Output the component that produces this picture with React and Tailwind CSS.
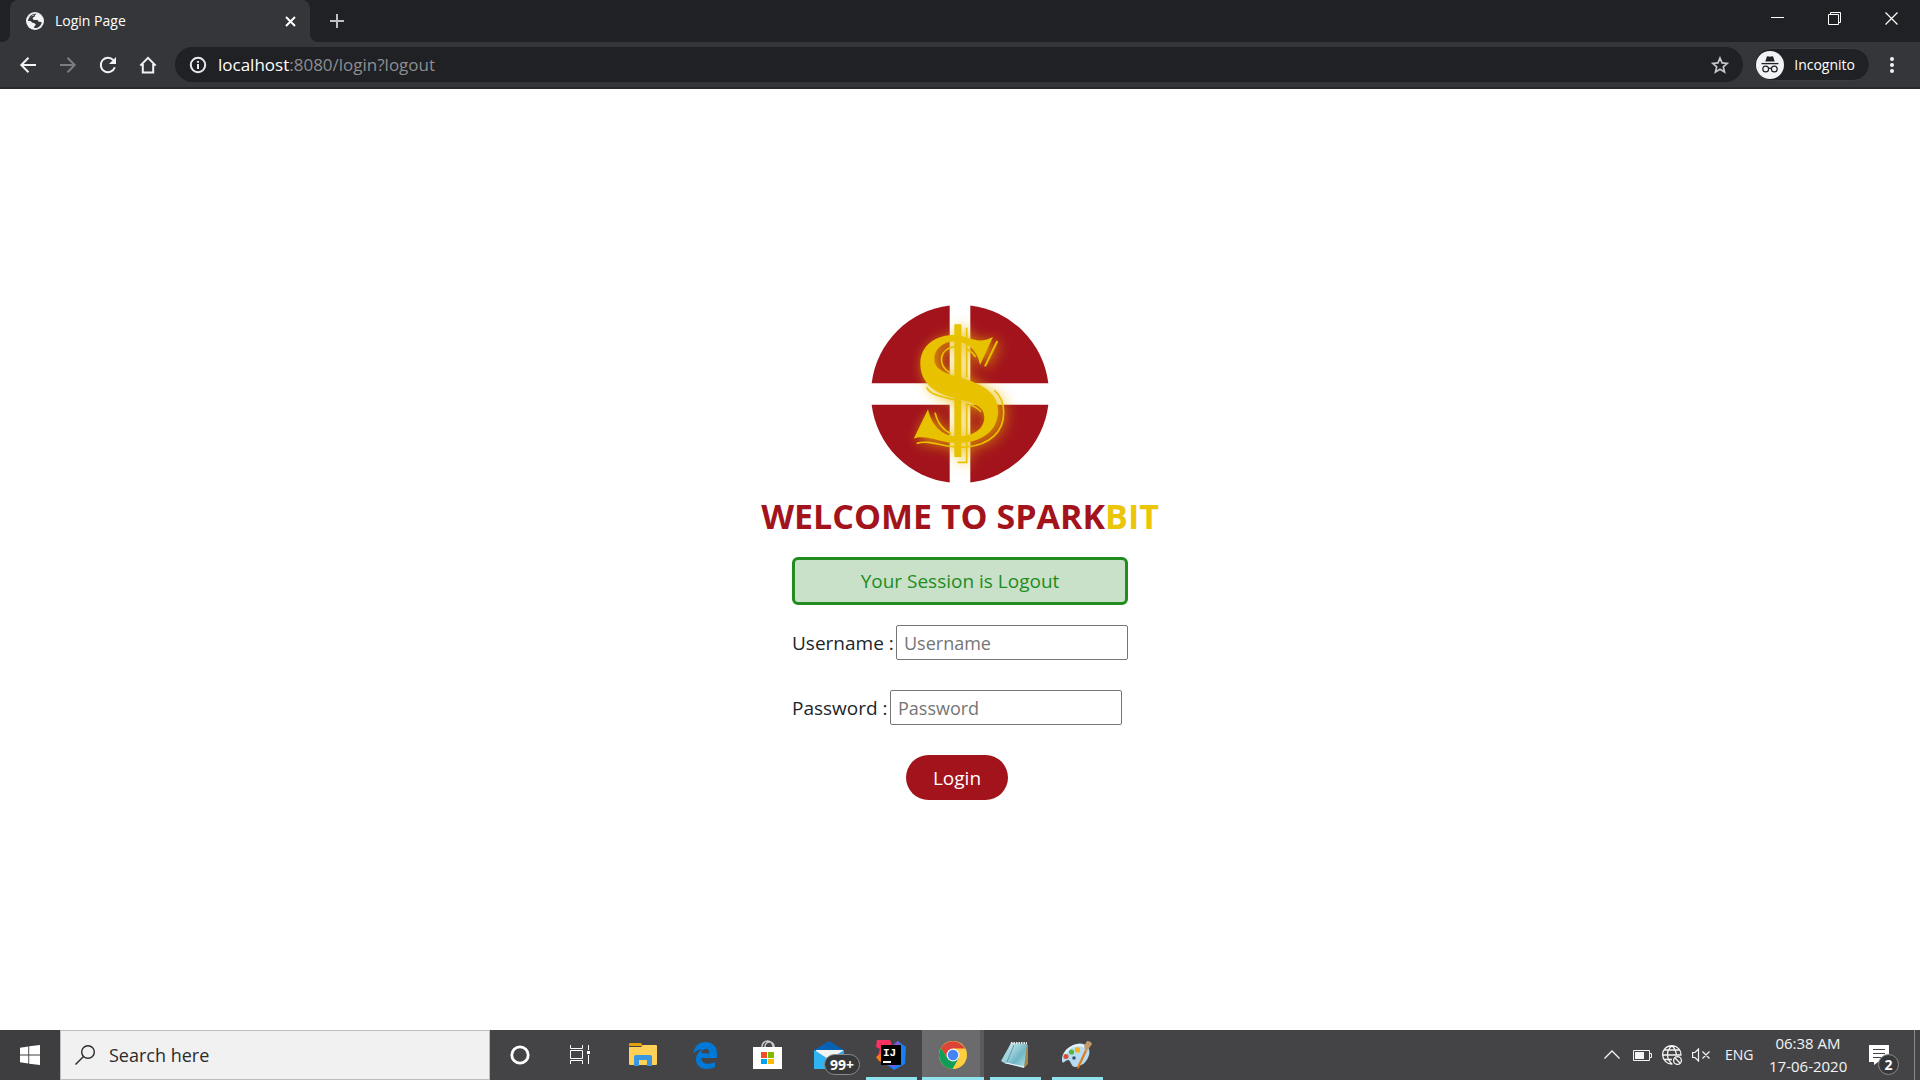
import React from "react";

function TabFlare({ side }) {
  return (
    <span className="block h-2 w-2 bg-[#35363a]">
      <span
        className={
          side === "left"
            ? "block h-2 w-2 rounded-br-lg bg-[#202124]"
            : "block h-2 w-2 rounded-bl-lg bg-[#202124]"
        }
      />
    </span>
  );
}

function TabStrip() {
  return (
    <div className="flex h-[42px] items-end bg-[#202124]">
      <div className="flex h-full items-end pl-[2px]">
        <TabFlare side="left" />
        <div className="flex h-full w-[300px] items-center rounded-t-lg bg-[#35363a] pl-4 pr-[14px] text-white">
          <svg className="h-[18px] w-[18px]" viewBox="0 0 18 18" aria-hidden="true">
            <circle cx="9" cy="9" r="9" fill="#f1f3f4" />
            <path
              d="M10.500 1.800Q8.500 3.200 8.600 4.800Q6.800 4.900 6.600 6.400Q7 8 9 8.100H11.200Q12.700 8.500 12.600 9.900Q14.500 9.600 15.800 10.600Q14.800 14.600 11 15.900Q9.600 16.200 8.200 16V14.400Q9.800 13.800 9.700 12.200Q9.200 11 7.600 10.900H5.200Q5 9 3.400 8.900H2Q2.600 4.600 5.800 2.700Q8 1.500 10.500 1.800Z"
              fill="#35363a"
            />
            <path d="M2 9.200H5Q5.600 11 7.800 11Q8.800 12.400 7.400 13.800V16.500Q2.600 14.500 2 9.200ZM2.800 6.400Q5.400 3 9.300 2.300Q7.500 4.200 4.800 4.600Q4.400 6 2.800 6.400Z" fill="#f1f3f4" />
          </svg>
          <h2 className="ml-[11px] flex-1 text-[14px] leading-5">Login Page</h2>
          <button type="button" aria-label="Close tab" className="flex h-3 w-3 items-center justify-center">
            <svg className="h-[11px] w-[11px]" viewBox="0 0 11 11" stroke="#fff" strokeWidth="2">
              <path d="M1 1 10 10M10 1 1 10" />
            </svg>
          </button>
        </div>
        <TabFlare side="right" />
      </div>
      <button type="button" aria-label="New tab" className="ml-[11px] mb-[13px] h-4 w-4">
        <svg className="h-4 w-4" viewBox="0 0 16 16" stroke="#bdc1c6" strokeWidth="2">
          <path d="M8 1v14M1 8h14" />
        </svg>
      </button>
      <div className="ml-auto flex h-full items-center pb-[5px] text-white">
        <button type="button" aria-label="Minimize" className="flex h-9 w-[57px] items-center justify-center">
          <svg className="h-[13px] w-[13px]" viewBox="0 0 13 13" stroke="currentColor" fill="none">
            <path d="M0 5.500h13" />
          </svg>
        </button>
        <button type="button" aria-label="Restore" className="flex h-9 w-[57px] items-center justify-center">
          <svg className="h-[13px] w-[13px]" viewBox="0 0 13 13" stroke="currentColor" fill="none">
            <path d="M.5 2.500h10v10h-10zM2.500 2.500v-2h10v10h-2" />
          </svg>
        </button>
        <button type="button" aria-label="Close" className="flex h-9 w-[57px] items-center justify-center">
          <svg className="h-[13px] w-[13px]" viewBox="0 0 13 13" stroke="currentColor" strokeWidth="1.200" fill="none">
            <path d="M.5.500l12 12M12.500.500l-12 12" />
          </svg>
        </button>
      </div>
    </div>
  );
}

function ToolButton({ label, dim, children }) {
  return (
    <button
      type="button"
      aria-label={label}
      className={
        dim
          ? "flex h-5 w-10 items-center justify-center text-[#7c7d80]"
          : "flex h-5 w-10 items-center justify-center text-[#f1f3f4]"
      }
    >
      <svg className="h-[18px] w-[18px]" viewBox="0 0 18 18" fill="none" stroke="currentColor" strokeWidth="2">
        {children}
      </svg>
    </button>
  );
}

function Toolbar() {
  return (
    <div className="flex h-[47px] items-center border-b-2 border-[#28292c] bg-[#35363a] pl-2 pr-[18px]">
      <ToolButton label="Back">
        <path d="M17 9H2.500M9.500 1.800 2.300 9l7.200 7.200" />
      </ToolButton>
      <ToolButton label="Forward" dim>
        <path d="M1 9h14.500M8.500 1.800 15.700 9l-7.200 7.200" />
      </ToolButton>
      <ToolButton label="Reload">
        <path d="M15.800 11.200A7.200 7.200 0 1 1 14.300 4.100" />
        <path d="M17 1v7h-7z" fill="currentColor" stroke="none" />
      </ToolButton>
      <ToolButton label="Home">
        <path d="M1.300 9.600 9 1.900l7.700 7.700M3.800 8v8.500h10.400V8" />
      </ToolButton>
      <div className="ml-[7px] flex h-[35px] flex-1 items-center rounded-full bg-[#202124] pl-[14px] pr-[14px]">
        <svg className="h-[18px] w-[18px]" viewBox="0 0 18 18" fill="none" stroke="#e8eaed" strokeWidth="2" aria-hidden="true">
          <circle cx="9" cy="9" r="7.200" />
          <path d="M9 8v5M9 5v1.800" />
        </svg>
        <p className="ml-[11px] flex-1 text-[17px] leading-6 text-[#8c8e91]">
          <span className="text-white">localhost</span>:8080/login?logout
        </p>
        <button type="button" aria-label="Bookmark this tab">
          <svg className="h-[18px] w-[18px]" viewBox="0 0 18 18" fill="none" stroke="#c4c7ca" strokeWidth="1.700">
            <path d="m9 2 2.050 4.900 5.200.450-3.950 3.450 1.200 5.200L9 13.250 4.500 16l1.200-5.200L1.750 7.350l5.200-.450z" />
          </svg>
        </button>
      </div>
      <div className="ml-[11px] flex h-[33px] items-center rounded-full border border-[#3c3d41] bg-[#202124] pl-px pr-[14px]">
        <svg className="h-7 w-7" viewBox="0 0 28 28" aria-hidden="true">
          <circle cx="14" cy="14" r="14" fill="#f1f3f4" />
          <path d="M9.300 10.500 10.800 5.800q.3-.8 1.100-.6l2.100.5 2.100-.5q.8-.2 1.100.6l1.500 4.700z" fill="#202124" />
          <path d="M5.500 12.600h17" stroke="#202124" strokeWidth="1.300" />
          <g fill="none" stroke="#202124" strokeWidth="1.200">
            <circle cx="9.700" cy="18" r="2.900" />
            <circle cx="18.300" cy="18" r="2.900" />
            <path d="M12.600 17.600q1.400-.9 2.800 0" />
          </g>
        </svg>
        <span className="ml-[10px] text-[14px] leading-5 text-white">Incognito</span>
      </div>
      <button type="button" aria-label="Menu" className="ml-3 flex h-5 w-5 items-center justify-center">
        <svg className="h-[18px] w-1" viewBox="0 0 4 18" fill="#f1f3f4">
          <circle cx="2" cy="3" r="2" />
          <circle cx="2" cy="9" r="2" />
          <circle cx="2" cy="15" r="2" />
        </svg>
      </button>
    </div>
  );
}

function EmblemShape() {
  return (
    <>
      <path
        fill="currentColor"
        d="M428 140 389 224C383 183 352 154 315 153C276 154 252 178 252 206C252 238 285 249 330 262C392 279 443 305 443 362C443 422 395 457 322 458C268 458 228 430 190 445L233 357C243 402 272 438 320 438C370 438 402 416 402 380C402 345 365 335 310 322C250 308 210 275 210 220C210 165 255 134 312 134C352 134 378 166 428 140Z"
      />
      <path fill="currentColor" d="M312 102h21v398h-21z" />
      <g fill="none" stroke="currentColor" strokeWidth="5">
        <path strokeWidth="6" d="M441 152 404 228" />
        <path d="M349 112V176Q366 184 376 200M349 165V262M322 516H349V341Q374 346 392 364" />
        <path d="M298 247C262 228 263 174 316 169" />
        <path d="M229 291C240 315 275 319 312 328" />
        <path d="M199 459C245 446 285 477 350 470C420 463 460 423 460 367C460 340 450 315 432 300" />
        <path d="M254 367C262 400 280 421 303 430" />
      </g>
    </>
  );
}

function Logo() {
  return (
    <svg className="h-[178px] w-[178px]" viewBox="62 44 534 534" role="img" aria-label="Sparkbit logo">
      <defs>
        <filter id="glow" x="-40%" y="-40%" width="180%" height="180%">
          <feGaussianBlur stdDeviation="19" />
        </filter>
      </defs>
      <g fill="#a2131c">
        <path d="M298 45.500V279H64A267 267 0 0 1 298 45.500Z" />
        <path d="M360 45.500V279H594A267 267 0 0 0 360 45.500Z" />
        <path d="M298 576.500V343H64A267 267 0 0 0 298 576.500Z" />
        <path d="M360 576.500V343H594A267 267 0 0 1 360 576.500Z" />
      </g>
      <g transform="translate(10 6)">
        <g className="text-[#e8b800]" filter="url(#glow)" opacity="0.9">
          <EmblemShape />
        </g>
      </g>
      <g className="text-[#e8c200]">
        <EmblemShape />
      </g>
    </svg>
  );
}

function LoginPage() {
  const field =
    "h-[35px] w-[232px] rounded-[2px] border border-[#767676] bg-white px-[7px] text-[18px] text-[#212529] placeholder:text-[#757575]";
  return (
    <main className="flex flex-1 flex-col items-center justify-center bg-white pb-[14px] text-[19px] leading-7 text-[#212529]">
      <Logo />
      <h1 className="mt-[9px] text-[34px] font-bold leading-[48px] text-[#a2131c]">
        WELCOME TO SPARK<span className="text-[#ebc50a]">BIT</span>
      </h1>
      <form className="mt-[17px] flex w-[336px] flex-col" onSubmit={(e) => e.preventDefault()}>
        <p role="status" className="flex h-12 items-center justify-center rounded-md border-[3px] border-[#228b22] bg-[#c8e1c8] text-[#228b22]">
          Your Session is Logout
        </p>
        <div className="mt-5 flex items-center justify-between">
          <label htmlFor="username">Username :</label>
          <input id="username" type="text" placeholder="Username" className={field} />
        </div>
        <div className="mt-[30px] mr-[6px] flex items-center justify-between">
          <label htmlFor="password">Password :</label>
          <input id="password" type="password" placeholder="Password" className={field} />
        </div>
        <div className="mt-[30px] mr-[6px] flex justify-center">
          <button type="submit" className="h-[45px] w-[102px] rounded-full bg-[#a2131c] text-white">
            Login
          </button>
        </div>
      </form>
    </main>
  );
}

function Task({ label, running, active, children }) {
  return (
    <button
      type="button"
      aria-label={label}
      className={
        active
          ? "relative flex h-full w-[62px] items-center justify-center border-r-4 border-[#5a5a5c] bg-[#6b6b6d] pl-1"
          : "relative flex h-full w-[62px] items-center justify-center"
      }
    >
      {children}
      {running && (
        <span
          className={
            active
              ? "absolute bottom-0 left-0 -right-1 h-[3px] bg-[#8ee3ee]"
              : "absolute bottom-0 left-[6px] right-[5px] h-[3px] bg-[#8ee3ee]"
          }
        />
      )}
    </button>
  );
}

function TaskApps() {
  return (
    <>
      <Task label="File Explorer">
        <svg className="h-6 w-7" viewBox="0 0 28 24">
          <path d="M0 1q0-1 1-1h11l2 3H0z" fill="#e0a008" />
          <path d="M0 4h12l2-2h13q1 0 1 1v18q0 1-1 1H1q-1 0-1-1z" fill="#ffd257" />
          <path d="M5 23V14q0-2 2-2h14q2 0 2 2v9h-5v-6h-8v6z" fill="#3897e0" />
        </svg>
      </Task>
      <Task label="Microsoft Edge">
        <svg className="mt-px h-[27px] w-6" viewBox="0 0 24 27">
          <path
            d="M0 12C1.500 4 6 0 12.500 0C20 0 24 5 24 11.500V16H8.200C8.500 20 11.500 21.800 15 21.800C18 21.800 20.500 20.800 22 19.800V25C20 26.200 17 27 13.500 27C7 27 3 22.800 3 17.500C3 13 5.500 9.500 9.500 7.500C5 7.700 2 9 0 12ZM8.400 11.300H16.400C16.400 8.500 15 7 12.600 7C10 7 8.700 8.800 8.400 11.300Z"
            fill="#0078d7"
          />
        </svg>
      </Task>
      <Task label="Microsoft Store">
        <svg className="mb-px h-[29px] w-[29px]" viewBox="0 0 29 29">
          <path d="M9 8V6.500a5.500 5.500 0 0 1 11 0V8M12 8V6a4.500 4.500 0 0 1 9 1" fill="none" stroke="#c9c9c9" strokeWidth="1.500" />
          <path d="M0 7h29v22H0z" fill="#fff" />
          <path d="M8 12h6v6H8z" fill="#f25022" />
          <path d="M15 12h6v6h-6z" fill="#7fba00" />
          <path d="M8 19h6v5H8z" fill="#00a4ef" />
          <path d="M15 19h6v5h-6z" fill="#ffb900" />
        </svg>
      </Task>
      <Task label="Mail, more than 99 unread">
        <svg className="h-7 w-[30px]" viewBox="0 0 30 28">
          <path d="M0 9 15 0l15 9v7H0z" fill="#0862b4" />
          <path d="M2 9h27v9H2z" fill="#f3f3f3" />
          <path d="M0 9 15 19 30 9v19H0z" fill="#29a8ea" />
          <path d="M0 9 30 28H0z" fill="#2fb3f3" />
        </svg>
        <span className="absolute left-[26px] top-6 flex h-[21px] w-9 items-center justify-center rounded-full border border-[#8b8b8d] bg-[#37383a] text-[14px] font-bold leading-none text-white">
          99+
        </span>
      </Task>
      <Task label="IntelliJ IDEA" running>
        <svg className="h-[30px] w-[30px]" viewBox="0 0 30 30">
          <path d="M1 0h13l3 8-5 16-7-2-4-4 3-9-4-2z" fill="#fc3161" />
          <path d="m0 17 7-5 2 11-6-2z" fill="#f97a12" />
          <path d="m18 4 4-3 8 6-1 17-11 6-8-6z" fill="#167ff5" />
          <path d="m6 24 9-17 7-6 4 8-7 18z" fill="#8a55d7" />
          <path d="M5 5h20v20H5z" fill="#000" />
          <text x="7" y="16" fill="#fff" fontSize="11" fontWeight="bold" fontFamily="Liberation Mono, monospace">IJ</text>
          <path d="M7 21h8v2H7z" fill="#fff" />
        </svg>
      </Task>
      <Task label="Google Chrome" running active>
        <svg className="h-7 w-7" viewBox="0 0 28 28">
          <circle cx="14" cy="14" r="14" fill="#ffcd40" />
          <path d="M1.900 7A14 14 0 0 1 26.100 7.600H14L8.500 17.200z" fill="#db4437" />
          <path d="M1.900 7A14 14 0 0 0 13.500 28L19.600 17.200 8.500 17.200z" fill="#0f9d58" />
          <circle cx="14" cy="14" r="6.500" fill="#f1f1f1" />
          <circle cx="14" cy="14" r="5.200" fill="#4285f4" />
        </svg>
      </Task>
      <Task label="Notepad" running>
        <svg className="h-7 w-7" viewBox="0 0 28 28">
          <defs>
            <linearGradient id="pad" x1="0" y1="0" x2="1" y2="1">
              <stop offset="0" stopColor="#e3f5f8" />
              <stop offset="0.6" stopColor="#6fb6c5" />
              <stop offset="1" stopColor="#b9e6ec" />
            </linearGradient>
          </defs>
          <path d="m24 2 3 2v19l-4 4z" fill="#a48541" />
          <path d="M10 2 0 20l5 3L12 5z" fill="#9ed5df" />
          <path d="m10 2 16 1-3 24L3 22z" fill="url(#pad)" />
          <path d="m13 4-7 17" stroke="#5a9fae" />
          <path d="M10 2h16" stroke="#e9e9e9" strokeWidth="2" strokeDasharray="1.500 1" />
          <path d="m5 22 18 4" stroke="#f4fbfc" />
        </svg>
      </Task>
      <Task label="Paint" running>
        <svg className="h-7 w-[30px]" viewBox="0 0 30 28">
          <path d="M15 3C24 1 29 7 27 14C25 22 19 25 14 26C9 27 9 19 6 19C3 19 1 24 0 20C-1 12 6 5 15 3Z" fill="#b7dcef" />
          <path d="M3 13Q7 5 16 4q5 0 8 3" stroke="#e5f4fb" strokeWidth="2" fill="none" />
          <circle cx="4" cy="15.500" r="2.500" fill="#dc4b36" />
          <circle cx="9.500" cy="11" r="2.600" fill="#55b541" />
          <circle cx="15.500" cy="9" r="2.700" fill="#f3b321" />
          <circle cx="12" cy="17" r="1.800" fill="#35516e" />
          <path d="m23 9 2 1-8 17-2 1 1-4z" fill="#e0791c" />
          <path d="M22 5 25 0q4 0 5 3l-5 7-2-1z" fill="#c49a6a" />
        </svg>
      </Task>
    </>
  );
}

function Tray() {
  return (
    <div className="ml-auto flex h-full items-center text-[#f4f4f4]">
      <button type="button" aria-label="Show hidden icons">
        <svg className="h-[10px] w-4" viewBox="0 0 16 10" fill="none" stroke="currentColor" strokeWidth="1.300">
          <path d="M.5 8.500 8 1l7.500 7.500" />
        </svg>
      </button>
      <svg className="ml-[13px] h-[11px] w-[19px]" viewBox="0 0 19 11" fill="none" stroke="currentColor" role="img" aria-label="Battery">
        <path d="M.5.500h16v10H.5zM17 3.500h1.500v4H17" />
        <path d="M2 2h9v7H2z" fill="currentColor" stroke="none" />
      </svg>
      <svg className="ml-[10px] h-5 w-5" viewBox="0 0 20 20" fill="none" stroke="currentColor" strokeWidth="1.300" role="img" aria-label="No internet">
        <path d="M10.500 19A9.200 9.200 0 1 1 19 10.500M9.800.8C4 6 4 13 9.800 19M10.200.8C13 4 14.400 7 14.400 10.500M2.300 5h15.400M.8 10h18.400M2.300 14.500H10" />
        <circle cx="15.500" cy="15.500" r="3.900" />
        <path d="m12.800 12.800 5.400 5.400" />
      </svg>
      <svg className="ml-[10px] h-[14px] w-[18px]" viewBox="0 0 18 14" fill="none" stroke="currentColor" strokeWidth="1.200" role="img" aria-label="Muted">
        <path d="M.6 4.500h2.400L6.500 1v12L3 9.500H.6zM10.500 3.500l7 7M17.500 3.500l-7 7" />
      </svg>
      <span className="ml-[15px] w-[30px] text-[14px] leading-5">ENG</span>
      <time className="ml-[14px] w-[78px] whitespace-nowrap text-center text-[15px] leading-[23px]">
        06:38 AM
        <br />
        17-06-2020
      </time>
      <button type="button" aria-label="2 notifications" className="relative ml-[22px] h-5 w-5">
        <svg className="h-5 w-5" viewBox="0 0 20 20">
          <path d="M0 0h20v17H9l-4 3v-3H0z" fill="#fff" />
          <path d="M4 4.500h12M4 8.500h12M4 12.500h8" stroke="#444446" />
        </svg>
        <span className="absolute left-[9px] top-[9px] flex h-[21px] w-[21px] items-center justify-center rounded-full border border-[#8b8b8d] bg-[#37383a] text-[14px] font-bold leading-none text-white">
          2
        </span>
      </button>
      <span className="ml-[25px] mr-[5px] h-[50px] w-px bg-[#8a8a8c]" />
    </div>
  );
}

function Taskbar() {
  return (
    <footer className="flex h-[50px] items-center bg-[#444446]">
      <button type="button" aria-label="Start" className="flex h-full w-[60px] items-center justify-center bg-[#3e3e40]">
        <svg className="h-5 w-5" viewBox="0 0 20 20" fill="#fff">
          <path d="M0 2.700 8.300 1.500V9.500H0zM9.200 1.300 20 0v9.500H9.200zM0 10.400h8.300v8.100L0 17.300zM9.200 10.400H20V20L9.200 18.700z" />
        </svg>
      </button>
      <div className="flex h-full w-[430px] items-center border border-[#bdbdbd] bg-[#f1f1f1] pl-[14px] text-[#2b2b2b]">
        <svg className="h-5 w-5 shrink-0" viewBox="0 0 20 20" fill="none" stroke="currentColor" strokeWidth="1.400" aria-hidden="true">
          <circle cx="13" cy="7" r="6.300" />
          <path d="M8.500 11.500.5 19.500" />
        </svg>
        <input
          type="text"
          aria-label="Search"
          placeholder="Search here"
          className="ml-[14px] w-full bg-transparent text-[18px] leading-6 placeholder:text-[#2b2b2b]"
        />
      </div>
      <button type="button" aria-label="Cortana" className="flex h-full w-[60px] items-center justify-center">
        <svg className="h-5 w-5" viewBox="0 0 20 20" fill="none" stroke="#fff" strokeWidth="2.800">
          <circle cx="10" cy="10" r="8.200" />
        </svg>
      </button>
      <button type="button" aria-label="Task View" className="mr-[2px] flex h-full w-[60px] items-center justify-center">
        <svg className="mb-px h-[19px] w-5" viewBox="0 0 20 19" fill="none" stroke="#fff">
          <path d="M.5 0v3.500h12V0M.5 5.500h12v8H.5zM.5 19v-3.500h12V19M18.500 0v5M18.500 10v9" />
          <path d="M17 6h3v3h-3z" fill="#fff" stroke="none" />
        </svg>
      </button>
      <TaskApps />
      <Tray />
    </footer>
  );
}

export default function App() {
  return (
    <div className="flex min-h-screen flex-col font-['Open_Sans','Noto_Sans',sans-serif]">
      <header>
        <TabStrip />
        <Toolbar />
      </header>
      <LoginPage />
      <Taskbar />
    </div>
  );
}
